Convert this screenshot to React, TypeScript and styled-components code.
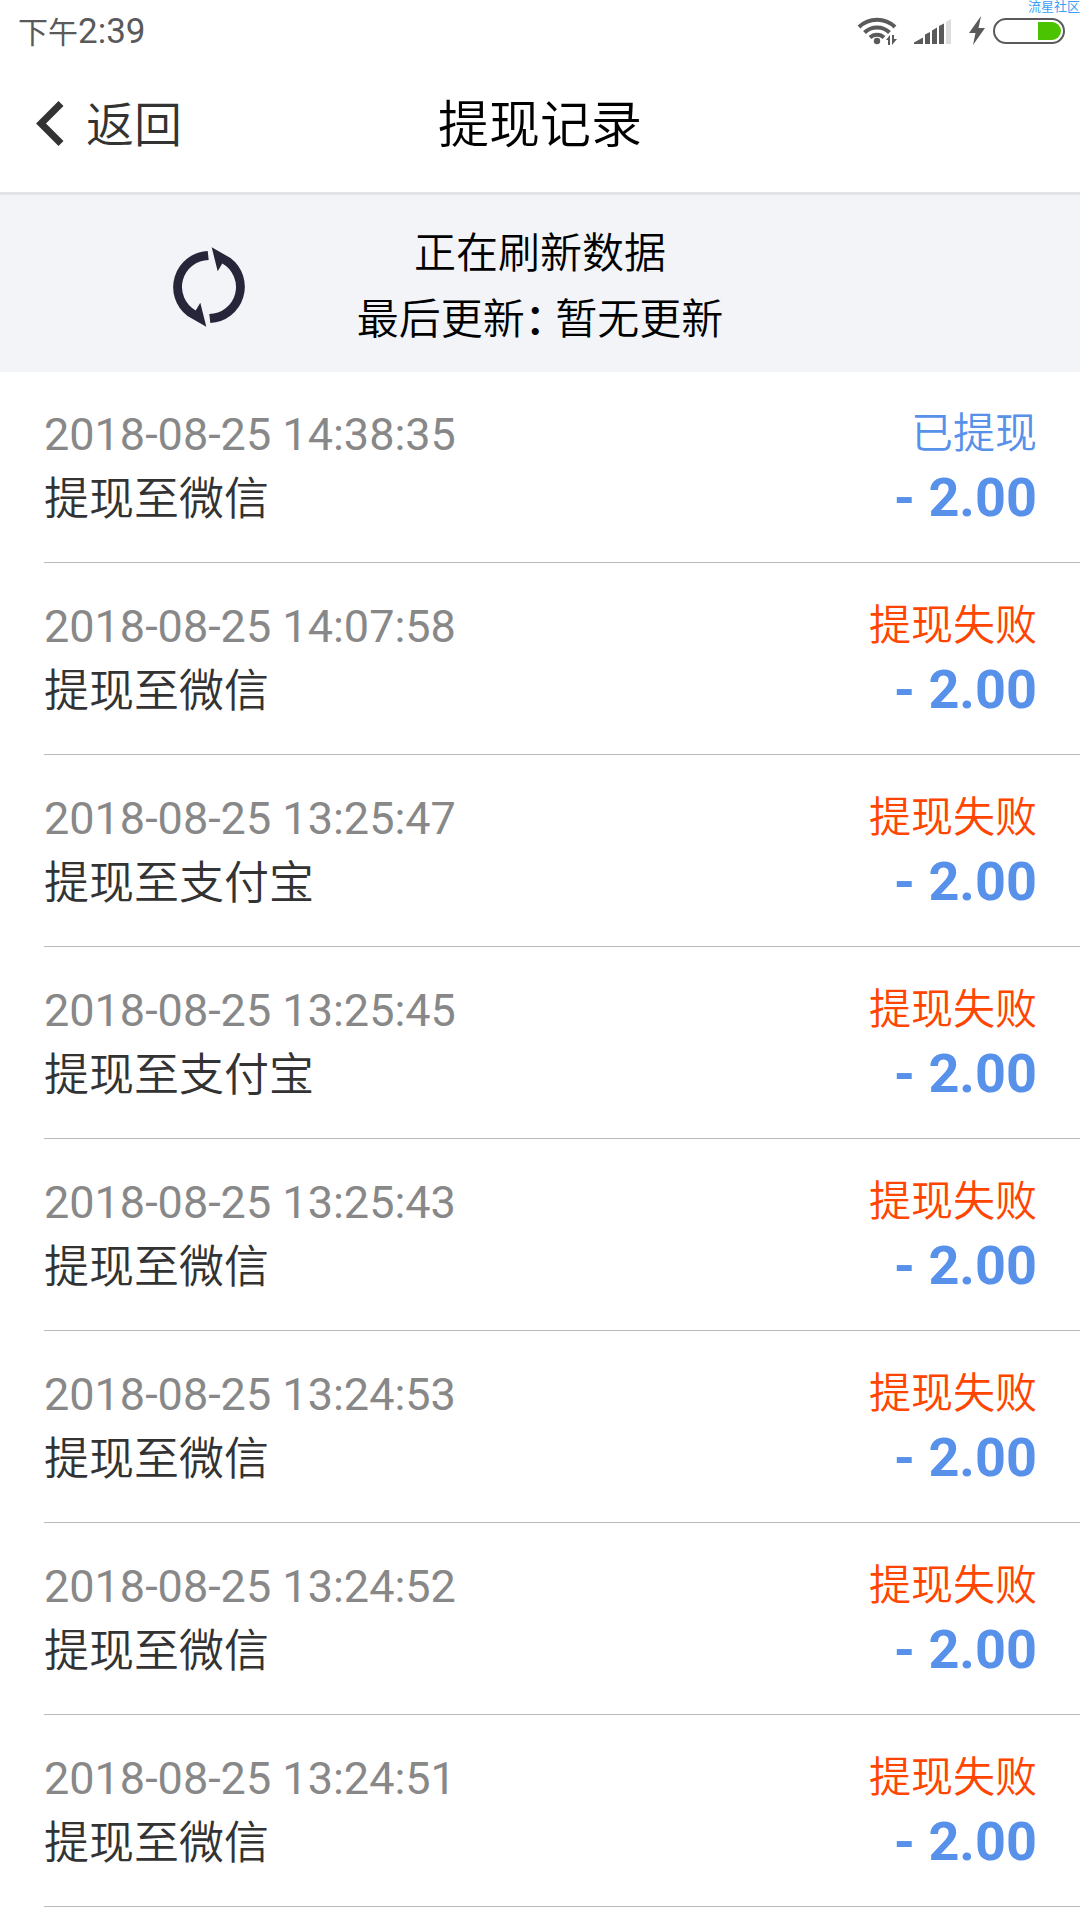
import React from "react";
import styled, { createGlobalStyle } from "styled-components";

const GlobalStyle = createGlobalStyle`
  * { box-sizing: border-box; }
  body {
    margin: 0;
    background: #fff;
    color: #333;
    font-family: Roboto, "Noto Sans CJK SC", sans-serif;
  }
`;

const Page = styled.div`
  position: relative;
  overflow: hidden;
`;

const Watermark = styled.span`
  position: absolute;
  top: 0;
  right: 0;
  color: #3b9ff5;
  font-size: 13px;
  line-height: 14px;
`;

const StatusBar = styled.div`
  display: flex;
  align-items: center;
  justify-content: space-between;
  height: 58px;
  padding: 6px 15px 0 18px;
  color: #5a5a5a;
`;

const Clock = styled.time`
  font-size: 30px;
  line-height: 40px;
`;

const ClockDigits = styled.span`
  font-size: 35px;
`;

const StatusIcons = styled.div`
  display: flex;
  align-items: center;
  margin-bottom: 2px;

  svg {
    display: block;
  }
`;

const Header = styled.header`
  display: grid;
  grid-template-columns: 1fr auto 1fr;
  align-items: center;
  height: 137px;
  padding-top: 2px;
  border-bottom: 3px solid #e1e3e8;
`;

const BackButton = styled.button`
  display: flex;
  align-items: center;
  justify-self: start;
  gap: 22px;
  padding: 0 0 0 36px;
  border: 0;
  background: none;
  color: #333;
  font-family: inherit;
  font-size: 48px;
  font-weight: 350;
  line-height: 66px;
`;

const Title = styled.h1`
  margin: 0;
  color: #000;
  font-size: 51px;
  font-weight: 350;
  line-height: 66px;
`;

const RefreshPanel = styled.section`
  display: grid;
  grid-template-columns: 1fr auto 1fr;
  align-items: center;
  margin-bottom: -1px;
  padding: 26px 0 19px;
  background: #f2f4f8;
`;

const RefreshIcon = styled.svg`
  margin-left: 172px;
`;

const RefreshText = styled.div`
  color: #000;
  font-size: 42px;
  font-weight: 350;
  line-height: 66px;
  text-align: center;
`;

const HalfWidth = styled.span`
  font-family: "Noto Sans CJK SC", sans-serif;
  font-feature-settings: "halt";
  font-weight: 500;
  line-height: 1;
`;

const Records = styled.ul`
  margin: 0;
  padding: 0 0 0 44px;
  list-style: none;
`;

const Record = styled.li`
  display: flex;
  justify-content: space-between;
  padding: 31px 43px 30px 0;
  border-bottom: 1px solid #bbb;
`;

const Column = styled.div<{ $end?: boolean }>`
  display: flex;
  flex-direction: column;
  align-items: ${(p) => (p.$end ? "flex-end" : "flex-start")};
  line-height: ${(p) => (p.$end ? "64px" : "65px")};
`;

const RecordTime = styled.time`
  color: #888;
  font-size: 45px;
`;

const Target = styled.span`
  font-size: 45px;
  font-weight: 350;
`;

const State = styled.span<{ $failed: boolean }>`
  color: ${(p) => (p.$failed ? "#ff4500" : "#5891ea")};
  font-size: 42px;
  font-weight: 350;
`;

const Amount = styled.strong`
  color: #5891ea;
  font-size: 54px;
  font-weight: 700;
`;

const records = [
  { time: "2018-08-25 14:38:35", target: "提现至微信", failed: false },
  { time: "2018-08-25 14:07:58", target: "提现至微信", failed: true },
  { time: "2018-08-25 13:25:47", target: "提现至支付宝", failed: true },
  { time: "2018-08-25 13:25:45", target: "提现至支付宝", failed: true },
  { time: "2018-08-25 13:25:43", target: "提现至微信", failed: true },
  { time: "2018-08-25 13:24:53", target: "提现至微信", failed: true },
  { time: "2018-08-25 13:24:52", target: "提现至微信", failed: true },
  { time: "2018-08-25 13:24:51", target: "提现至微信", failed: true },
];

/* Wi-Fi, signal, charging bolt and battery */
const DeviceIcons = () => (
  <svg width="210" height="32" viewBox="0 0 210 32" aria-hidden="true">
    <g fill="none" stroke="#5a5a5a" strokeWidth="4">
      <path d="M4 12 A26 26 0 0 1 40 12" />
      <path d="M9.500 17.500 A18 18 0 0 1 34.500 17.500" />
      <path d="M15 22.500 A10 10 0 0 1 29 22.500" />
    </g>
    <circle cx="22" cy="26" r="3.200" fill="#5a5a5a" />
    <path d="M31 25 L35 20 V30 H33 V25 Z M37 20 H39 V24 H42 L37 30 Z" fill="#5a5a5a" />
    <path
      d="M59 29 V27.500 L68 22.500 V29 Z M70 19.500 L75 17 V29 H70 Z M77 15.500 L82 12.500 V29 H77 Z M84 11 L89 8.500 V29 H84 Z"
      fill="#5a5a5a"
    />
    <path d="M91 7 L96 4 V29 H91 Z" fill="#ddd" />
    <path d="M126 1 L114 18 H120.500 L118 30 L130 13 H123.500 Z" fill="#5a5a5a" />
    <rect x="139" y="4" width="70" height="24" rx="12" fill="none" stroke="#5a5a5a" strokeWidth="2" />
    <path d="M183 7 H197 A9 9 0 0 1 197 25 H183 Z" fill="#4bc300" />
  </svg>
);

export default function App() {
  return (
    <Page>
      <GlobalStyle />
      <StatusBar>
        <Clock>
          下午<ClockDigits>2:39</ClockDigits>
        </Clock>
        <StatusIcons>
          <DeviceIcons />
        </StatusIcons>
      </StatusBar>
      <Watermark>流星社区</Watermark>

      <Header>
        <BackButton type="button">
          <svg width="28" height="50" viewBox="0 0 28 50" aria-hidden="true">
            <path d="M25 2.500 L5 22.500 L25 42.500" fill="none" stroke="#333" strokeWidth="7" />
          </svg>
          返回
        </BackButton>
        <Title>提现记录</Title>
      </Header>

      <RefreshPanel>
        <RefreshIcon width="74" height="82" viewBox="0 0 74 82" aria-hidden="true">
          <g fill="#27253a">
            <path d="M35.700 5 L36.700 14 A27 27 0 0 0 23.700 64.500 L28.300 56.700 L34.300 80.700 L15.500 70 A36.200 36.200 0 0 1 35.700 5 Z" />
            <path d="M38.300 77 L37.300 68 A27 27 0 0 0 50.300 17.500 L45.700 25.300 L39.700 1.300 L58.500 12 A36.200 36.200 0 0 1 38.300 77 Z" />
          </g>
        </RefreshIcon>
        <RefreshText>
          <div>正在刷新数据</div>
          <div>
            最后更新<HalfWidth>： </HalfWidth>暂无更新
          </div>
        </RefreshText>
      </RefreshPanel>

      <Records>
        {records.map((r) => (
          <Record key={r.time}>
            <Column>
              <RecordTime>{r.time}</RecordTime>
              <Target>{r.target}</Target>
            </Column>
            <Column $end>
              <State $failed={r.failed}>{r.failed ? "提现失败" : "已提现"}</State>
              <Amount>- 2.00</Amount>
            </Column>
          </Record>
        ))}
      </Records>
    </Page>
  );
}
